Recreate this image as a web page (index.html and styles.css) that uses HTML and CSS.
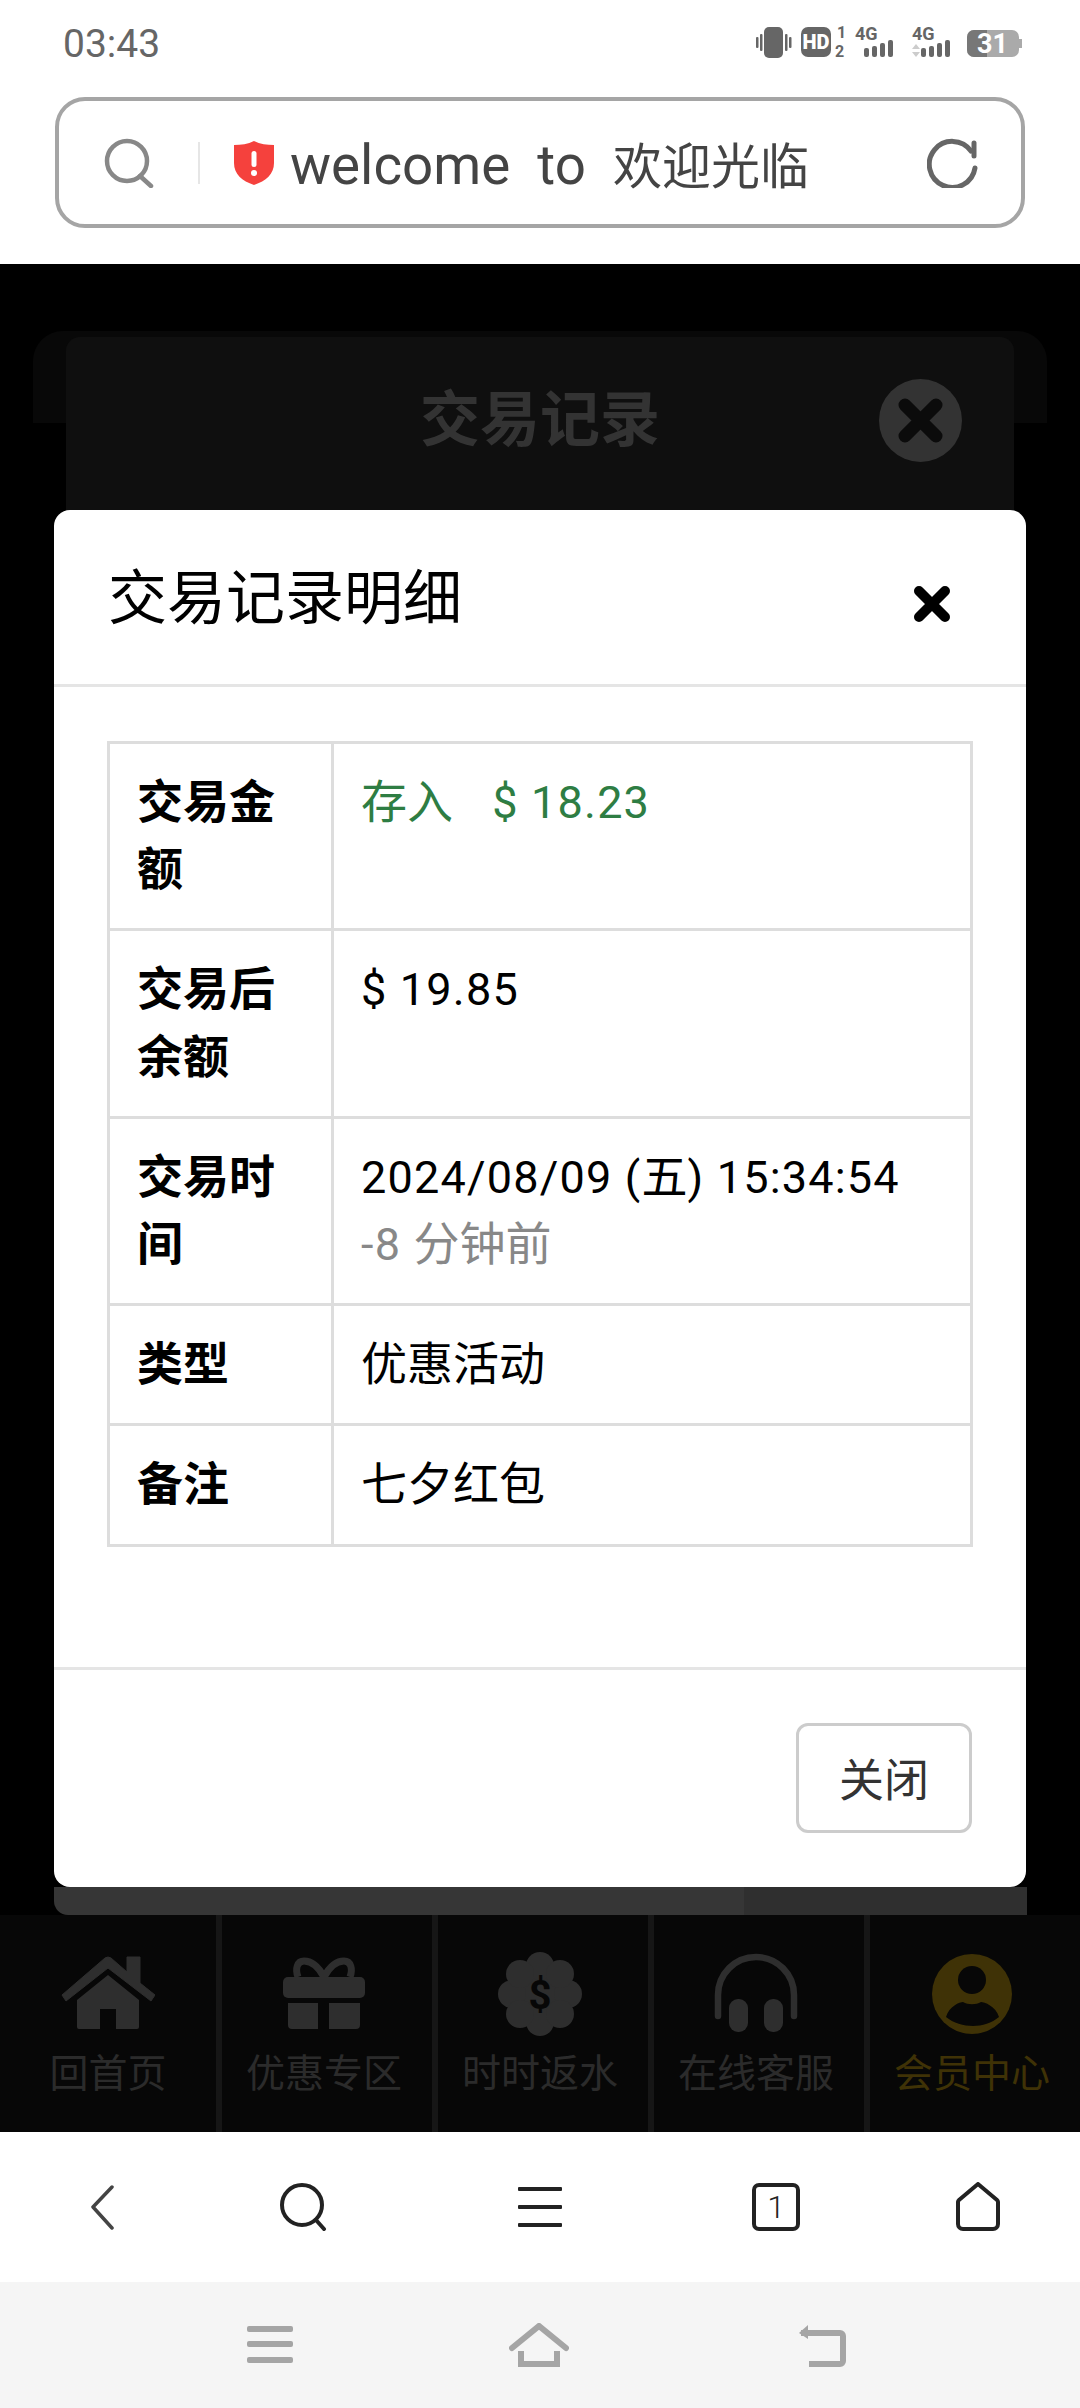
FILE: index.html
```html
<!DOCTYPE html>
<html lang="zh-CN">

<head>
    <meta charset="UTF-8">
    <meta name="viewport" content="width=device-width, initial-scale=1.0">
    <title>交易记录明细</title>
    <link rel="stylesheet" href="styles.css">
</head>

<body>
    <div class="status-bar">
        <span class="status-time">03:43</span>
        <svg class="status-icons" width="266" height="46" viewBox="0 -6 266 46">
            <g fill="#666">
                <rect x="8" y="0" width="19" height="31" rx="5"/>
                <rect x="0" y="10" width="2.5" height="11" rx="1"/>
                <rect x="4" y="7" width="2.5" height="17" rx="1"/>
                <rect x="29" y="7" width="2.5" height="17" rx="1"/>
                <rect x="33" y="10" width="2.5" height="11" rx="1"/>
                <rect x="45" y="0" width="30" height="30" rx="7"/>
                <text x="81" y="11" class="status-sim">1</text>
                <text x="79" y="30" class="status-sim">2</text>
                <text x="99" y="13" class="status-net">4G</text>
                <rect x="108" y="21" width="5" height="9" rx="2"/>
                <rect x="116" y="19" width="5" height="11" rx="2"/>
                <rect x="124" y="16" width="5" height="14" rx="2"/>
                <rect x="132" y="13" width="5" height="17" rx="2"/>
                <text x="156" y="13" class="status-net">4G</text>
                <rect x="165" y="21" width="5" height="9" rx="2"/>
                <rect x="173" y="19" width="5" height="11" rx="2"/>
                <rect x="181" y="16" width="5" height="14" rx="2"/>
                <rect x="189" y="13" width="5" height="17" rx="2"/>
                <path d="M156 22l4-5 4 5zM156 25l4 5 4-5z" fill="#ccc"/>
            </g>
            <rect x="211" y="3" width="52" height="27" rx="7" fill="#aaa"/>
            <path d="M263 12h3v9h-3z" fill="#aaa"/>
            <path d="M218 3h13v27h-13a7 7 0 0 1-7-7V10a7 7 0 0 1 7-7z" fill="#777"/>
            <text x="221" y="26" class="status-batt">31</text>
            <text x="60" y="22" class="status-hd">HD</text>
        </svg>
    </div>

    <div class="url-wrap">
        <div class="url-bar">
            <svg class="url-search" width="50" height="50" viewBox="0 0 50 50" fill="none" stroke="#888" stroke-width="4.5" stroke-linecap="round">
                <circle cx="23" cy="23" r="20"/>
                <path d="M36 38l11 10"/>
            </svg>
            <span class="url-sep"></span>
            <svg class="url-shield" width="42" height="44" viewBox="0 0 42 44">
                <path d="M21 0c6 3 13 4 20 4v18c0 11-8 18-20 22C9 40 1 33 1 22V4c7 0 14-1 20-4z" fill="#f5413d"/>
                <rect x="18.500" y="10" width="5" height="16" rx="2.500" fill="#fff"/>
                <circle cx="21" cy="32" r="3" fill="#fff"/>
            </svg>
            <span class="url-text"><span class="url-latin">welcome&nbsp; to&nbsp; </span>欢迎光临</span>
            <svg class="url-reload" width="52" height="50" viewBox="0 0 52 50" fill="none" stroke="#666" stroke-width="5" stroke-linecap="round">
                <path d="M48 30A23 23 0 1 1 44 13"/>
                <path d="M47 5v13"/>
            </svg>
        </div>
    </div>

    <div class="webview">
        <div class="page-sheet">
            <div class="page-panel">
                <h1 class="page-title">交易记录</h1>
                <svg class="page-close" width="83" height="83" viewBox="0 0 83 83">
                    <circle cx="41.500" cy="41.500" r="41.500" fill="#333"/>
                    <path d="M26 26l31 31M57 26L26 57" stroke="#0b0b0b" stroke-width="13" stroke-linecap="round"/>
                </svg>
            </div>
        </div>

        <div class="page-strip">
            <div class="strip-left"></div>
            <div class="strip-right"></div>
        </div>

        <nav class="tabbar">
            <div class="tab-item">
                <svg width="94" height="90" viewBox="0 0 94 90" fill="#2e2e2e">
                    <path d="M1 46L44 9q3-2 6 0l16 14V8h13v26l15 12-4 6L47 19 5 52z" stroke="#2e2e2e" stroke-width="1" stroke-linejoin="round"/>
                    <path d="M16 51L47 26l31 25v27a2 2 0 0 1-2 2H55V60H39v20H18a2 2 0 0 1-2-2z"/>
                </svg>
                <span class="tab-label">回首页</span>
            </div>
            <div class="tab-item">
                <svg width="94" height="90" viewBox="0 0 94 90" fill="#2e2e2e">
                    <path d="M47 28C40 15 32 12 27 12c-7 0-9 8-6 16M47 28c7-13 15-16 20-16 7 0 9 8 6 16" fill="none" stroke="#2e2e2e" stroke-width="7"/>
                    <rect x="6" y="28" width="82" height="21" rx="5"/>
                    <path d="M11 54h30v26H15a4 4 0 0 1-4-4zM52 54h31v22a4 4 0 0 1-4 4H52z"/>
                </svg>
                <span class="tab-label">优惠专区</span>
            </div>
            <div class="tab-item">
                <svg width="94" height="90" viewBox="0 0 94 90">
                    <g fill="#2e2e2e">
                        <circle cx="47" cy="45" r="30"/>
                        <circle cx="47" cy="17" r="14"/>
                        <circle cx="47" cy="73" r="14"/>
                        <circle cx="19" cy="45" r="14"/>
                        <circle cx="75" cy="45" r="14"/>
                        <circle cx="27" cy="25" r="14"/>
                        <circle cx="67" cy="25" r="14"/>
                        <circle cx="27" cy="65" r="14"/>
                        <circle cx="67" cy="65" r="14"/>
                    </g>
                    <text x="47" y="60" class="tab-dollar">$</text>
                </svg>
                <span class="tab-label">时时返水</span>
            </div>
            <div class="tab-item">
                <svg width="94" height="90" viewBox="0 0 94 90" fill="#2e2e2e">
                    <path d="M9 67V46a38 38 0 0 1 76 0v21" fill="none" stroke="#2e2e2e" stroke-width="6.500" stroke-linecap="round"/>
                    <rect x="20" y="50" width="19" height="33" rx="9"/>
                    <rect x="55" y="50" width="19" height="33" rx="9"/>
                </svg>
                <span class="tab-label">在线客服</span>
            </div>
            <div class="tab-item tab-active">
                <svg width="94" height="90" viewBox="0 0 94 90">
                    <circle cx="47" cy="45" r="40" fill="#3f3206"/>
                    <ellipse cx="47" cy="31" rx="14" ry="14" fill="#070707"/>
                    <path d="M21 68c3-11 14-15 17-15 5 3 13 3 18 0 3 0 15 4 18 15-7 6-17 9-26 9s-20-3-27-9z" fill="#070707"/>
                </svg>
                <span class="tab-label">会员中心</span>
            </div>
        </nav>

        <!-- Detail dialog, over the dimmed page -->
        <div class="modal">
            <div class="modal-header">
                <h2 class="modal-title">交易记录明细</h2>
                <svg class="modal-x" width="40" height="38" viewBox="0 0 40 38">
                    <path d="M7 6l26 26M33 6L7 32" stroke="#000" stroke-width="10" stroke-linecap="round"/>
                </svg>
            </div>
            <div class="modal-body">
                <table class="detail-table">
                    <tr>
                        <th>交易金额</th>
                        <td class="text-green">存入&nbsp;&nbsp; <span class="num amount">$ 18.23</span></td>
                    </tr>
                    <tr>
                        <th>交易后余额</th>
                        <td><span class="num">$ 19.85</span></td>
                    </tr>
                    <tr>
                        <th>交易时间</th>
                        <td><span class="num">2024/08/09 (</span>五<span class="num">) 15:34:54</span><br><span class="text-muted"><span class="num">-8 </span>分钟前</span></td>
                    </tr>
                    <tr>
                        <th>类型</th>
                        <td>优惠活动</td>
                    </tr>
                    <tr>
                        <th>备注</th>
                        <td>七夕红包</td>
                    </tr>
                </table>
            </div>
            <div class="modal-footer">
                <button class="btn-close">关闭</button>
            </div>
        </div>
    </div>

    <div class="toolbar">
        <svg class="tb-back" width="25" height="45" viewBox="0 0 25 45" fill="none" stroke="#444" stroke-width="3.500" stroke-linecap="round" stroke-linejoin="round">
            <path d="M22 2L3 22l19 21"/>
        </svg>
        <svg class="tb-search" width="48" height="48" viewBox="0 0 48 48" fill="none" stroke="#222" stroke-width="4" stroke-linecap="round">
            <circle cx="22" cy="22" r="20"/>
            <path d="M36 37l8 9"/>
        </svg>
        <svg class="tb-menu" width="44" height="40" viewBox="0 0 44 40" fill="#222">
            <rect x="0" y="0" width="44" height="4" rx="1"/>
            <rect x="0" y="18" width="44" height="4" rx="1"/>
            <rect x="0" y="36" width="44" height="4" rx="1"/>
        </svg>
        <div class="tab-count">1</div>
        <svg class="tb-home" width="46" height="50" viewBox="0 0 46 50" fill="none" stroke="#222" stroke-width="4" stroke-linejoin="round">
            <path d="M23 2l19 16a3 3 0 0 1 1 2v22a5 5 0 0 1-5 5H8a5 5 0 0 1-5-5V20a3 3 0 0 1 1-2z"/>
        </svg>
    </div>

    <div class="navbar">
        <svg width="46" height="38" viewBox="0 0 46 38" fill="#a5a5a5">
            <rect x="0" y="0" width="46" height="6" rx="2"/>
            <rect x="0" y="15" width="46" height="6" rx="2"/>
            <rect x="0" y="31" width="46" height="6" rx="2"/>
        </svg>
        <svg class="nav-home" width="60" height="44" viewBox="0 0 60 44" fill="none" stroke="#a5a5a5" stroke-width="6" stroke-linecap="round">
            <path d="M3 25L30 3l27 22"/>
            <path d="M12 28v13h36V28" stroke-linecap="butt"/>
        </svg>
        <svg class="nav-back" width="50" height="44" viewBox="0 0 50 44" fill="none" stroke="#a5a5a5" stroke-width="6">
            <path d="M4 10h39a3 3 0 0 1 3 3v25a3 3 0 0 1-3 3H12"/>
            <path d="M2 10l9-8v14z" fill="#a5a5a5" stroke="none"/>
        </svg>
    </div>
</body>

</html>
```
FILE: styles.css
```css
* {
    box-sizing: border-box;
}

html, body {
    margin: 0;
    padding: 0;
}

body {
    width: 1080px;
    height: 2408px;
    display: flex;
    flex-direction: column;
    overflow: hidden;
    background-color: #fff;
    font-family: Roboto, "Noto Sans CJK SC", sans-serif;
}

h1, h2 {
    margin: 0;
}

/* Phone status bar */
.status-bar {
    height: 97px;
    padding: 25px 58px 0 63px;
    display: flex;
    justify-content: space-between;
    align-items: flex-start;
}

.status-time {
    font-size: 39px;
    line-height: 39px;
    color: #666;
}

.status-icons {
    margin-top: -4px;
}

.status-sim {
    font-size: 16px;
    font-weight: 700;
}

.status-net {
    font-size: 18px;
    font-weight: 700;
}

.status-batt {
    font-size: 27px;
    font-weight: 700;
    fill: #fff;
}

.status-hd {
    font-size: 20px;
    font-weight: 900;
    fill: #fff;
    text-anchor: middle;
}

/* Browser address bar */
.url-wrap {
    height: 167px;
    padding: 0 55px;
}

.url-bar {
    height: 131px;
    display: flex;
    align-items: center;
    padding: 0 42px 0 45px;
    border: 4px solid #a5a5a5;
    border-radius: 30px;
}

.url-sep {
    width: 2px;
    height: 42px;
    margin: 0 33px 0 44px;
    background-color: #e6e6e6;
}

.url-text {
    margin-left: 15px;
    font-size: 49px;
    line-height: 60px;
    margin-top: 7px;
    color: #444;
    flex: 1;
    white-space: nowrap;
}

.url-latin {
    font-size: 54.7px;
}

/* Page behind the dialog */
.webview {
    flex: 1;
    position: relative;
    display: flex;
    flex-direction: column;
    background-color: #000;
}

.page-sheet {
    margin: 67px 33px 0;
    height: 92px;
    background-color: #080808;
    border-radius: 30px 30px 0 0;
    padding: 6px 33px 0;
}

.page-panel {
    height: 200px;
    position: relative;
    display: flex;
    align-items: center;
    justify-content: center;
    padding-bottom: 46px;
    background-color: #0f0f0f;
    border-radius: 14px;
}

.page-title {
    font-size: 60px;
    font-weight: 700;
    color: #333;
}

.page-close {
    position: absolute;
    top: 42px;
    right: 52px;
}

.page-strip {
    margin: auto 53px 0 54px;
    height: 28px;
    display: flex;
}

.strip-left {
    width: 690px;
    background-color: #363636;
    border-radius: 0 0 0 14px;
}

.strip-right {
    flex: 1;
    background-color: #2f2f2f;
}

.tabbar {
    height: 217px;
    display: grid;
    grid-template-columns: repeat(5, 1fr);
    background-color: #070707;
}

.tab-item {
    display: flex;
    flex-direction: column;
    align-items: center;
    padding-top: 34px;
}

.tab-item + .tab-item {
    border-left: 6px solid #161616;
    padding-right: 6px;
}

.tab-label {
    margin-top: 10px;
    font-size: 39px;
    line-height: 50px;
    color: #2b2b2b;
    white-space: nowrap;
}

.tab-active .tab-label {
    color: #3f3206;
}

.tab-dollar {
    font-size: 40px;
    font-weight: 700;
    fill: #070707;
    text-anchor: middle;
}

/* Detail dialog */
.modal {
    position: absolute;
    top: 246px;
    left: 54px;
    width: 972px;
    background-color: #fff;
    border-radius: 16px;
    color: #000;
}

.modal-header {
    height: 177px;
    padding: 0 74px 8px 54px;
    display: flex;
    align-items: center;
    justify-content: space-between;
    border-bottom: 3px solid #e5e5e5;
}

.modal-title {
    font-size: 59px;
    font-weight: 400;
}

.modal-x {
    margin-top: 22px;
}

.modal-body {
    padding: 54px 53px 120px 53px;
}

.detail-table {
    width: 100%;
    border-collapse: collapse;
    font-size: 46px;
    line-height: 67.2px;
}

.detail-table th,
.detail-table td {
    border: 3px solid #ddd;
    padding: 25px 27px;
    text-align: left;
    vertical-align: top;
    font-weight: 400;
}

.detail-table th {
    width: 224px;
    padding-right: 29px;
    font-weight: 700;
}

.num {
    font-size: 45px;
    letter-spacing: 1.2px;
}

.amount {
    margin-left: 5px;
}

.text-green {
    color: #2e7d43;
}

.text-muted {
    color: #888;
}

.modal-footer {
    height: 220px;
    padding: 53px 54px 54px;
    display: flex;
    justify-content: flex-end;
    border-top: 3px solid #e5e5e5;
}

.btn-close {
    width: 176px;
    height: 110px;
    padding: 0;
    font-family: inherit;
    font-size: 45px;
    color: #333;
    background-color: #fff;
    border: 3px solid #ccc;
    border-radius: 12px;
}

/* Browser bottom toolbar */
.toolbar {
    height: 150px;
    display: flex;
    align-items: center;
    padding: 0 0 0 90px;
}

.tb-search {
    margin-left: 165px;
}

.tb-menu {
    margin-left: 190px;
}

.tab-count {
    width: 48px;
    height: 48px;
    margin-left: 190px;
    display: flex;
    align-items: center;
    justify-content: center;
    border: 4px solid #222;
    border-radius: 7px;
    font-size: 32px;
    font-weight: 300;
    color: #222;
}

.tb-home {
    margin-left: 155px;
}

/* Android navigation bar */
.navbar {
    height: 126px;
    display: flex;
    align-items: center;
    padding: 0 0 0 247px;
    background-color: #f5f5f5;
}

.nav-home {
    margin-left: 216px;
}

.nav-back {
    margin-left: 228px;
}
```
